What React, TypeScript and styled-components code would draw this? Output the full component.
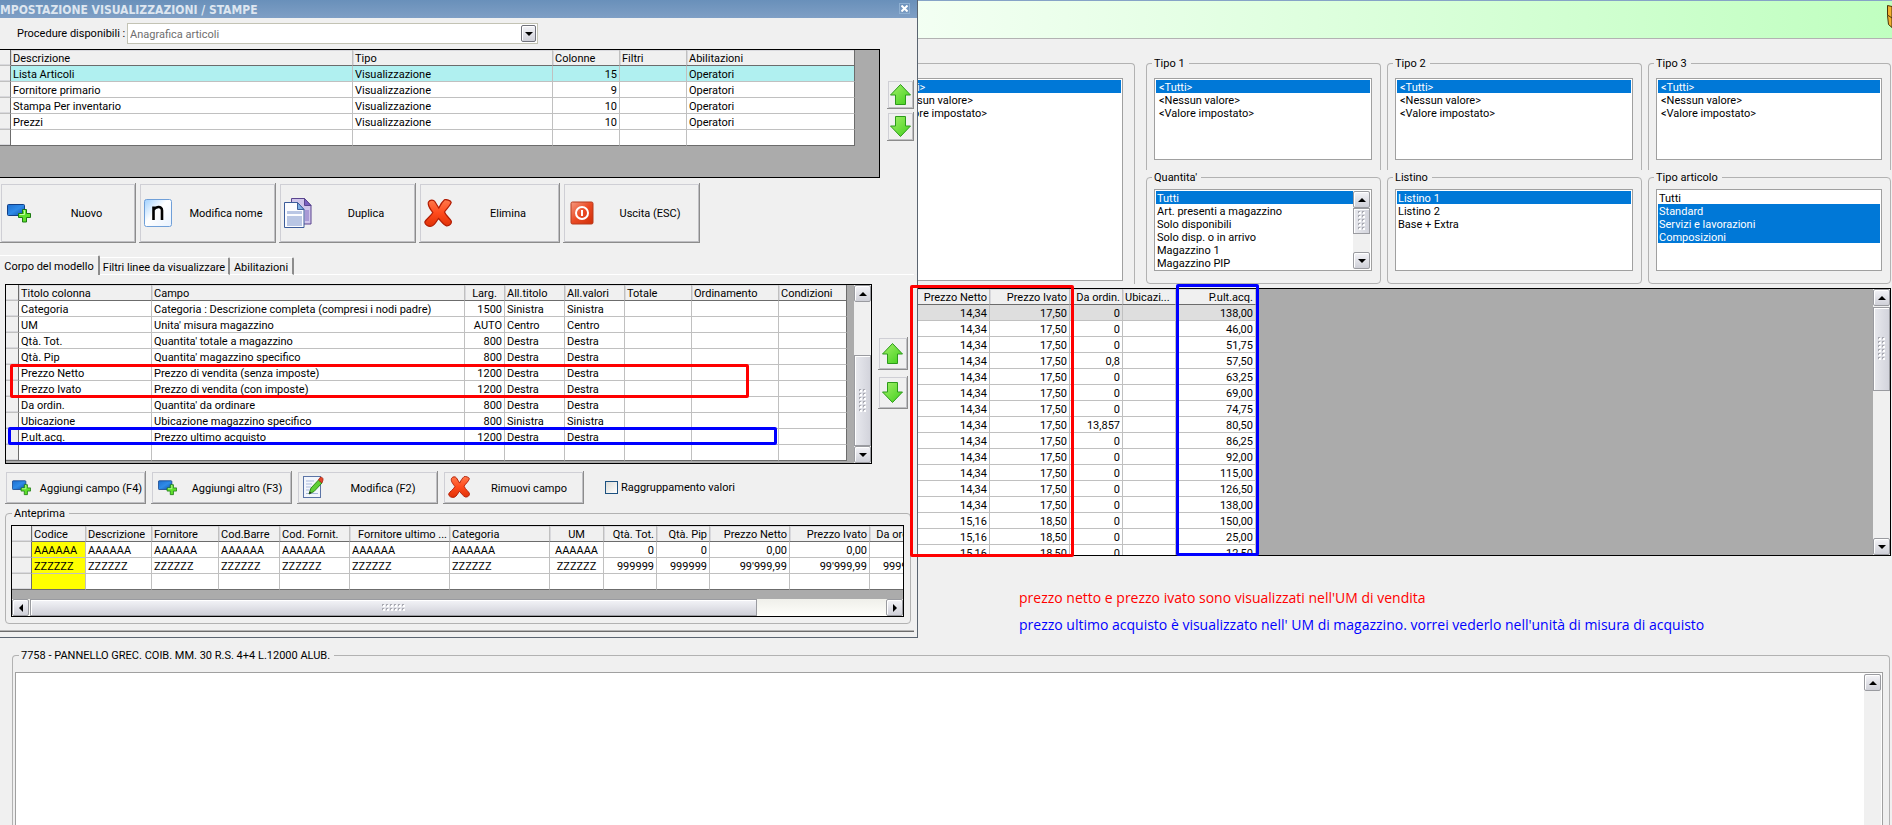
import React from "react";
import styled, { createGlobalStyle, css } from "styled-components";

const face = "#f0f0f0";
const uiFont = 'Roboto, "DejaVu Sans Condensed", sans-serif';

const GlobalStyle = createGlobalStyle`
  *, *::before, *::after { box-sizing: border-box; }
  body {
    margin: 0;
    background: ${face};
    color: #000;
    font: 11px/13px ${uiFont};
    overflow: hidden;
  }
  button, select, input, textarea { font: inherit; color: inherit; margin: 0; }
`;

/* ---------- shared parts ---------- */

const GroupBox = styled.fieldset`
  margin: 0;
  min-width: 0;
  border: 1px solid #b2b2b2;
  border-radius: 4px;
  padding: 7px 8px 0 7px;
`;

const GroupTitle = styled.legend`
  margin-left: -2px;
  padding: 0 4px 0 2px;
  line-height: 15px;
`;

const scrollFace = css`
  border: 1px solid #9a9ba0;
  background: linear-gradient(#f4f4f8, #cfd0d8);
  box-shadow: inset 1px 1px 0 #fff;
`;

const ScrollColumn = styled.div`
  flex: none;
  display: flex;
  flex-direction: column;
  width: 17px;
  background: #f0f0f0;
`;

const ScrollRow = styled.div`
  flex: none;
  display: flex;
  height: 17px;
  background: linear-gradient(#efefea, #fefefa);
`;

const ScrollButton = styled.button`
  ${scrollFace}
  flex: none;
  display: grid;
  place-items: center;
  width: 17px;
  height: 17px;
  border-radius: 2px;
  padding: 0;
`;

const ScrollTrack = styled.div<{ $offset: number }>`
  flex: 1;
  display: flex;
  min-height: 0;
  padding-top: ${(p) => p.$offset}px;
`;

const VerticalThumb = styled.div<{ $length: number }>`
  ${scrollFace}
  display: grid;
  place-items: center;
  width: 17px;
  height: ${(p) => p.$length}px;
  background: linear-gradient(90deg, #e8e9ee, #d3d4dc);
`;

const HorizontalThumb = styled.div`
  ${scrollFace}
  display: grid;
  place-items: center;
  width: 727px;
  margin: 0 auto 0 1px;
`;

const Triangle = ({ dir }: { dir: "up" | "down" | "left" | "right" }) => {
  const points = {
    up: "0,6 4,2 8,6",
    down: "0,2 4,6 8,2",
    left: "6,0 2,4 6,8",
    right: "2,0 6,4 2,8",
  }[dir];
  return (
    <svg width="8" height="8" viewBox="0 0 8 8" aria-hidden="true">
      <polygon points={points} fill="#000" />
    </svg>
  );
};

const Grip = ({ cols, rows }: { cols: number; rows: number }) => (
  <svg width={cols * 4} height={rows * 4} aria-hidden="true">
    {Array.from({ length: cols * rows }, (_, i) => {
      const x = (i % cols) * 4;
      const y = Math.floor(i / cols) * 4;
      return (
        <g key={i}>
          <rect x={x + 1} y={y + 1} width="2" height="2" fill="#fff" />
          <path d={`M${x} ${y}h2v1h-1v1h-1z`} fill="#a9aab2" />
        </g>
      );
    })}
  </svg>
);

type BarProps = { offset?: number; length?: number; gripRows?: number; down?: boolean };

const VerticalBar = ({ offset = 1, length, gripRows = 6, down = true }: BarProps) => (
  <ScrollColumn>
    <ScrollButton type="button" aria-label="Scorri su"><Triangle dir="up" /></ScrollButton>
    <ScrollTrack $offset={offset}>
      {length ? <VerticalThumb $length={length}><Grip cols={2} rows={gripRows} /></VerticalThumb> : null}
    </ScrollTrack>
    {down && <ScrollButton type="button" aria-label="Scorri giù"><Triangle dir="down" /></ScrollButton>}
  </ScrollColumn>
);

/* ---------- data grid ---------- */

const GridFrame = styled.div`
  display: flex;
  border: 1px solid #000;
  background: #ababab;
  overflow: hidden;
`;

const GridTable = styled.table`
  flex: none;
  align-self: flex-start;
  table-layout: fixed;
  width: 1px;
  border-collapse: separate;
  border-spacing: 0;
`;

const cell = css<{ $align?: string }>`
  height: 16px;
  padding: 2px 2px 0;
  border-right: 1px solid #c0c0c0;
  border-bottom: 1px solid #c0c0c0;
  line-height: 13px;
  font-weight: normal;
  white-space: pre;
  overflow: hidden;
  text-align: ${(p) => p.$align ?? "left"};
`;

const HeadCell = styled.th<{ $align?: string }>`
  ${cell}
  background: ${face};
  border-bottom-color: #6c6c6c;
  box-shadow: inset 1px 1px 0 #d9d9dd;
`;

const BodyCell = styled.td<{ $align?: string; $fill?: string }>`
  ${cell}
  background: ${(p) => p.$fill ?? "#fff"};
`;

const RowHead = styled.th`
  ${cell}
  background: ${face};
  border-right-color: #6c6c6c;
  box-shadow: inset 0 -1px 0 #d9d9dd;
`;

const GridRow = styled.tr<{ $dark?: boolean }>`
  > :last-child { border-right-color: ${(p) => (p.$dark ? "#6c6c6c" : "#c0c0c0")}; }
  tbody > &:last-child > * { border-bottom-color: #6c6c6c; }
`;

type Column = { title: string; width: number; align?: string; headAlign?: string; fill?: string };

type DataGridProps = {
  columns: Column[];
  rows: string[][];
  rowHead?: number;
  firstFill?: string;
  edge?: boolean;
};

const DataGrid = ({ columns, rows, rowHead, firstFill, edge }: DataGridProps) => (
  <GridTable>
    <colgroup>
      {rowHead ? <col width={rowHead} /> : null}
      {columns.map((c) => <col key={c.title} width={c.width} />)}
    </colgroup>
    <thead>
      <GridRow $dark={edge}>
        {rowHead ? <RowHead aria-label="Riga" /> : null}
        {columns.map((c) => (
          <HeadCell key={c.title} scope="col" $align={c.headAlign ?? c.align}>{c.title}</HeadCell>
        ))}
      </GridRow>
    </thead>
    <tbody>
      {rows.map((row, r) => (
        <GridRow key={r} $dark={edge}>
          {rowHead ? <RowHead /> : null}
          {columns.map((c, i) => (
            <BodyCell key={c.title} $align={c.align} $fill={c.fill ?? (r === 0 ? firstFill : undefined)}>
              {row[i] ?? ""}
            </BodyCell>
          ))}
        </GridRow>
      ))}
    </tbody>
  </GridTable>
);

/* ---------- icons ---------- */

const AddIcon = ({ size }: { size: number }) => (
  <svg width={size} height={size} viewBox="0 0 24 24" aria-hidden="true">
    <defs>
      <linearGradient id="addBlue" x1="0" y1="0" x2="1" y2="1">
        <stop offset="0" stopColor="#1f6fd0" /><stop offset="0.5" stopColor="#2f8be8" /><stop offset="1" stopColor="#1050a8" />
      </linearGradient>
    </defs>
    <rect x="0.5" y="3.5" width="17" height="11" rx="1" fill="url(#addBlue)" stroke="#123f86" />
    <path d="M15.500 8.500h4v4h4v4h-4v4.500h-4v-4.500h-4v-4h4z" fill="#5fe02c" stroke="#1c7a12" />
    <path d="M16.500 9.500h1v4h-5" fill="none" stroke="#c4ffa0" />
  </svg>
);

const RenameIcon = () => (
  <svg width="28" height="28" viewBox="0 0 28 28" aria-hidden="true">
    <defs>
      <linearGradient id="keyFill" x1="0" y1="0" x2="1" y2="1">
        <stop offset="0" stopColor="#9fd0ff" /><stop offset="0.45" stopColor="#fff" /><stop offset="1" stopColor="#e8f2ff" />
      </linearGradient>
    </defs>
    <rect x="0.5" y="0.5" width="27" height="27" rx="2" fill="url(#keyFill)" stroke="#6f9fd8" />
    <path d="M9.500 21V7.500M9.500 11C11 8 18 6 18 11.500V21" fill="none" stroke="#000" strokeWidth="2.600" />
  </svg>
);

const CopyIcon = () => (
  <svg width="28" height="30" viewBox="0 0 28 30" aria-hidden="true">
    <path d="M7.500 0.500h13l6.500 7v18.500h-19.500z" fill="#cfc4ea" stroke="#5a458f" />
    <path d="M20.500 0.500v7h6.500z" fill="#7a5fc0" stroke="#5a458f" />
    <path d="M21 12h4v11h-4z" fill="#a99ad6" />
    <path d="M0.500 4.500h13l6.500 7v18h-19.500z" fill="#fbfcff" stroke="#3c5c9a" />
    <path d="M13.500 4.500v7h6.500z" fill="#7fb0e4" stroke="#3c5c9a" />
    <path d="M3 13h15v3h-15zM3 18h15v10h-15z" fill="#b9c6e4" />
  </svg>
);

const DeleteIcon = ({ size }: { size: number }) => (
  <svg width={size} height={size} viewBox="0 0 28 28" aria-hidden="true">
    <defs>
      <linearGradient id="delRed" x1="0" y1="0" x2="0" y2="1">
        <stop offset="0" stopColor="#ff7a4c" /><stop offset="0.5" stopColor="#ff4a1c" /><stop offset="1" stopColor="#e03208" />
      </linearGradient>
    </defs>
    <path d="M4.500 3C6 .5 9.500 .5 10.800 2.500l4 6.500C16.500 5.500 18.500 2.500 20.500 .8c1.500-.8 6.700 .8 6.700 2.700-1 3.500-5 6.500-6.700 9.500 1.500 4 5.500 6.500 6.700 9 .8 2.500-1.700 5-4.700 4.800-3.500-1-5.500-5-8-7.300-2 2.500-3.500 6.500-6.500 7.500C4.500 28 .8 26 .8 23c1.500-3.500 6-5.500 8-9.500C7 10.500 3 7 4.500 3z" fill="url(#delRed)" stroke="#b01c04" strokeWidth="1.200" />
  </svg>
);

const ExitIcon = () => (
  <svg width="24" height="24" viewBox="0 0 24 24" aria-hidden="true">
    <defs>
      <linearGradient id="exitRed" x1="0" y1="0" x2="1" y2="1">
        <stop offset="0" stopColor="#f59a80" /><stop offset="0.5" stopColor="#ea4a24" /><stop offset="1" stopColor="#cf2e08" />
      </linearGradient>
    </defs>
    <rect x="1" y="1" width="22" height="22" rx="1.500" fill="url(#exitRed)" stroke="#b83a1c" />
    <circle cx="12" cy="12" r="6" fill="none" stroke="#fff" strokeWidth="2" />
    <path d="M12 9v6" stroke="#fff" strokeWidth="2" />
  </svg>
);

const EditIcon = () => (
  <svg width="22" height="22" viewBox="0 0 22 22" aria-hidden="true">
    <rect x="1.500" y="0.500" width="17" height="21" fill="#f3f6fc" stroke="#5b74a6" />
    <path d="M4 5h8M4 8h6M4 11h5M4 14h4M4 17.500h12" stroke="#a9b9dc" />
    <path d="M7 18l2-6L16.500 4l3.500 3-8 8.500z" fill="#5fcf35" stroke="#2f8a1c" />
    <path d="M16.500 4l1.500-2.500c1.500-1 3.500.5 3 2.500l-1 3z" fill="#e2452a" stroke="#a82a14" strokeWidth="0.800" />
    <path d="M7 18l.8-2.600 1.800 1.600z" fill="#222" />
  </svg>
);

const GreenArrow = ({ down }: { down?: boolean }) => (
  <svg width="21" height="21" viewBox="0 0 21 21" aria-hidden="true">
    <defs>
      <linearGradient id="arrowGreen" x1="0" y1="0" x2="1" y2="1">
        <stop offset="0" stopColor="#a5f06a" /><stop offset="1" stopColor="#3fcf1a" />
      </linearGradient>
    </defs>
    <path
      d={down ? "M5.500 0.500h10v9.500h5L10.500 20.500.5 10h5z" : "M10.500 0.500L20.500 11h-5v9.500h-10V11H.5z"}
      fill="url(#arrowGreen)"
      stroke="#2c9a1a"
    />
  </svg>
);

const BoxIcon = () => (
  <svg width="5" height="24" viewBox="0 0 5 24" aria-hidden="true">
    <path d="M0.500 0.500l4.500 1v21l-3.500-3-1-9z" fill="#f0b030" stroke="#4a3208" />
    <path d="M0.500 10l4.500 3" stroke="#4a3208" />
  </svg>
);

/* ---------- main window ---------- */

const Page = styled.main`
  position: relative;
  display: flex;
  flex-direction: column;
  height: 100vh;
  overflow: hidden;
`;

const TopBar = styled.header`
  flex: none;
  display: flex;
  justify-content: flex-end;
  height: 39px;
  padding-top: 4px;
  border-top: 1px solid #86a3c7;
  border-bottom: 1px solid #b2b2b2;
  background: linear-gradient(90deg, #fff 36%, #c0ffc0);
`;

const Filters = styled.section`
  flex: none;
  display: grid;
  grid-template-columns: 261fr 235fr 255fr 243fr;
  grid-template-rows: 114px 114px;
  column-gap: 6px;
  padding: 17px 1px 0 879px;
`;

const OpenGroup = styled(GroupBox)`
  border-bottom: 0;
  border-radius: 4px 4px 0 0;
`;

const TallGroup = styled(OpenGroup)`
  grid-row: span 2;
  margin-right: 5px;
  padding-right: 11px;
`;

const LowGroup = styled(GroupBox)`
  padding-top: 4px;
`;

const ListFrame = styled.div<{ $tall?: boolean }>`
  display: flex;
  height: ${(p) => (p.$tall ? 203 : 82)}px;
  padding: 1px;
  border: 1px solid #a0a0a0;
  background: #fff;
`;

const ListBox = styled.select<{ $indent: number }>`
  flex: 1;
  min-width: 0;
  height: 100%;
  border: 0;
  border-radius: 0;
  padding: 0;
  outline: 0;
  background: #fff;
  overflow: hidden;
  scrollbar-width: none;

  option {
    height: 13px;
    min-height: 13px;
    padding: 1px ${(p) => p.$indent}px 0;
    line-height: 13px;
    color: #000;
  }
  option:checked {
    background: #0078d7 linear-gradient(#0078d7, #0078d7);
    color: #fff;
    -webkit-text-fill-color: #fff;
  }
`;

const ValueList = ({ label, items, selected, indent = 1, tall, bar }: {
  label: string; items: string[]; selected: string[]; indent?: number; tall?: boolean; bar?: React.ReactNode;
}) => (
  <ListFrame $tall={tall}>
    <ListBox multiple aria-label={label} defaultValue={selected} $indent={indent}>
      {items.map((i) => <option key={i} value={i}>{i}</option>)}
    </ListBox>
    {bar}
  </ListFrame>
);

const ResultsFrame = styled(GridFrame)`
  flex: none;
  height: 268px;
  margin: 4px 1px 0 0;
  padding-left: 908px;
  justify-content: space-between;
`;

const Notes = styled.section`
  flex: none;
  padding: 28px 0 0 1019px;
  font: 14px/27px "Open Sans", sans-serif;
  white-space: nowrap;
`;

const Note = styled.p<{ $color: string }>`
  margin: 0;
  color: ${(p) => p.$color};
`;

const DetailGroup = styled(OpenGroup)`
  flex: 1;
  display: flex;
  margin: 10px 2px 0 12px;
  padding: 9px 6px 0 2px;
`;

const DetailTitle = styled(GroupTitle)`
  margin-left: 4px;
`;

const DetailFrame = styled.div`
  flex: 1;
  display: flex;
  padding: 1px 1px 0;
  border: 1px solid #a0a0a0;
  border-bottom: 0;
  background: #fff;
`;

const DetailText = styled.textarea`
  flex: 1;
  border: 0;
  padding: 2px;
  outline: 0;
  resize: none;
  background: #fff;
`;

/* ---------- dialog ---------- */

const Dialog = styled.section`
  position: absolute;
  top: 0;
  left: 0;
  width: 918px;
  height: 638px;
  border-right: 1px solid #5a6470;
  border-bottom: 1px solid #5a6470;
  background: ${face};
`;

const TitleBar = styled.header`
  display: flex;
  justify-content: space-between;
  height: 18px;
  padding-right: 7px;
  background: linear-gradient(#6990ba, #7f9fc5);
`;

const Title = styled.h1`
  margin: 0;
  padding-top: 2px;
  color: #dde6f0;
  font: bold 12px/16px "DejaVu Sans Condensed", "DejaVu Sans", sans-serif;
`;

const CloseButton = styled.button`
  display: grid;
  place-items: center;
  width: 11px;
  height: 11px;
  margin-top: 3px;
  border: 1px solid #8fb0d2;
  padding: 0;
  background: transparent;
`;

const ProcedureRow = styled.div`
  display: flex;
  align-items: center;
  height: 31px;
  padding-left: 17px;
`;

const ProcedureLabel = styled.label`
  width: 110px;
  line-height: 15px;
`;

const ComboFrame = styled.div`
  display: flex;
  align-items: center;
  width: 411px;
  height: 21px;
  padding-right: 1px;
  border: 1px solid #c3c3b4;
  background: #fff;
`;

const Combo = styled.select`
  flex: 1;
  height: 19px;
  border: 0;
  padding: 1px 2px 0;
  outline: 0;
  appearance: none;
  background: transparent;
  color: #6e6e6e;
`;

const ComboArrow = styled.span`
  ${scrollFace}
  display: grid;
  place-items: center;
  width: 15px;
  height: 17px;
  border-color: #70717a;
  border-radius: 2px;
`;

const SideBySide = styled.div`
  position: relative;
  display: flex;
`;

const ProcedureFrame = styled(GridFrame)`
  width: 880px;
  height: 129px;
  border-left: 0;
`;

const MoveColumn = styled.div<{ $large?: boolean }>`
  display: flex;
  flex-direction: column;
  gap: ${(p) => (p.$large ? 6 : 3)}px;
  padding: ${(p) => (p.$large ? "53px 0 0 6px" : "31px 0 0 7px")};
`;

const raised = css`
  border: 0;
  border-right: 1px solid #8c8c8c;
  border-bottom: 1px solid #8c8c8c;
  border-radius: 0;
  background: ${face};
  box-shadow: inset 1px 1px 0 ${face}, inset 2px 2px 0 #cfcfd5, inset -1px -1px 0 #bfbfc3;
`;

const MoveButton = styled.button<{ $large?: boolean }>`
  ${raised}
  display: grid;
  place-items: center;
  width: ${(p) => (p.$large ? 30 : 27)}px;
  height: ${(p) => (p.$large ? 33 : 29)}px;
  padding: 0;
`;

const Toolbar = styled.div`
  display: flex;
  gap: 3px;
  padding-top: 5px;
`;

const ToolButton = styled.button<{ $width?: number }>`
  ${raised}
  display: grid;
  grid-template-columns: 38px 1fr;
  align-items: center;
  width: ${(p) => p.$width ?? 137}px;
  height: 60px;
  padding: 0;
  text-align: center;
`;

const IconSlot = styled.span`
  display: grid;
  place-items: center;
`;

const Caption = styled.span`
  padding-top: 2px;
`;

const Tabs = styled.div`
  display: flex;
  align-items: flex-end;
  margin-right: 3px;
  padding-top: 12px;
`;

const Tab = styled.button<{ $active?: boolean; $width: number }>`
  width: ${(p) => p.$width}px;
  height: ${(p) => (p.$active ? 20 : 18)}px;
  border: 0;
  border-top: 1px solid #fff;
  border-right: 2px solid #8c8c8c;
  border-bottom: ${(p) => (p.$active ? "0" : "1px solid #fff")};
  border-radius: 0 2px 0 0;
  padding: 2px 0 0;
  background: ${face};
  white-space: nowrap;
`;

const TabLine = styled.div`
  flex: 1;
  border-bottom: 1px solid #fff;
`;

const ModelFrame = styled(GridFrame)`
  width: 867px;
  height: 180px;
  justify-content: space-between;
`;

const ModelSection = styled(SideBySide)`
  padding: 9px 0 0 5px;
`;

const Actions = styled.div`
  display: flex;
  align-items: center;
  gap: 5px;
  padding: 7px 0 0 5px;
`;

const ActionButton = styled.button`
  ${raised}
  display: grid;
  grid-template-columns: 32px 1fr;
  align-items: center;
  width: 141px;
  height: 33px;
  padding: 0;
  text-align: center;
  white-space: nowrap;
`;

const CheckLabel = styled.label`
  display: flex;
  align-items: center;
  gap: 3px;
  margin-left: 16px;
`;

const Check = styled.input`
  appearance: none;
  width: 13px;
  height: 13px;
  border: 1px solid #1c5180;
  background: linear-gradient(135deg, #dcdcd7, #fff);
`;

const PreviewGroup = styled(GroupBox)`
  margin: 2px 6px 0 5px;
  padding: 4px 6px 6px 5px;
`;

const PreviewTitle = styled(GroupTitle)`
  margin-left: 1px;
`;

const PreviewFrame = styled(GridFrame)`
  flex-direction: column;
  justify-content: space-between;
  height: 92px;
`;

const FooterRule = styled.hr`
  height: 2px;
  margin: 6px 3px 0 0;
  border: 0;
  border-top: 1px solid #b5b5b5;
  border-bottom: 1px solid #6c6c6c;
`;

/* ---------- highlight marks drawn over the windows ---------- */

const Mark = styled.div`
  position: absolute;
  border: 3px solid #f00;
  border-radius: 2px;
  pointer-events: none;
`;

const SalePriceRowsMark = styled(Mark)`
  top: 89px;
  left: 10px;
  width: 739px;
  height: 34px;
`;

const PurchaseRowMark = styled(Mark)`
  top: 152px;
  left: 8px;
  width: 769px;
  height: 18px;
  border-color: #00f;
`;

const SalePriceColumnsMark = styled(Mark)`
  top: 285px;
  left: 910px;
  width: 164px;
  height: 272px;
`;

const PurchaseColumnMark = styled(Mark)`
  top: 284px;
  left: 1176px;
  width: 83px;
  height: 272px;
  border-color: #00f;
`;

/* ---------- data ---------- */

const anyValue = ["<Tutti>", "<Nessun valore>", "<Valore impostato>"];

const procedureColumns: Column[] = [
  { title: "Descrizione", width: 342 },
  { title: "Tipo", width: 200 },
  { title: "Colonne", width: 67, align: "right", headAlign: "left" },
  { title: "Filtri", width: 67 },
  { title: "Abilitazioni", width: 168 },
];

const procedureRows = [
  ["Lista Articoli", "Visualizzazione", "15", "", "Operatori"],
  ["Fornitore primario", "Visualizzazione", "9", "", "Operatori"],
  ["Stampa Per inventario", "Visualizzazione", "10", "", "Operatori"],
  ["Prezzi", "Visualizzazione", "10", "", "Operatori"],
  [],
];

const modelColumns: Column[] = [
  { title: "Titolo colonna", width: 133 },
  { title: "Campo", width: 313 },
  { title: "Larg.", width: 40, align: "right", headAlign: "center" },
  { title: "All.titolo", width: 60 },
  { title: "All.valori", width: 60 },
  { title: "Totale", width: 67 },
  { title: "Ordinamento", width: 87 },
  { title: "Condizioni", width: 68 },
];

const modelRows = [
  ["Categoria", "Categoria : Descrizione completa (compresi i nodi padre)", "1500", "Sinistra", "Sinistra"],
  ["UM", "Unita' misura magazzino", "AUTO", "Centro", "Centro"],
  ["Qtà. Tot.", "Quantita' totale a magazzino", "800", "Destra", "Destra"],
  ["Qtà. Pip", "Quantita' magazzino specifico", "800", "Destra", "Destra"],
  ["Prezzo Netto", "Prezzo di vendita (senza imposte)", "1200", "Destra", "Destra"],
  ["Prezzo Ivato", "Prezzo di vendita (con imposte)", "1200", "Destra", "Destra"],
  ["Da ordin.", "Quantita' da ordinare", "800", "Destra", "Destra"],
  ["Ubicazione", "Ubicazione magazzino specifico", "800", "Sinistra", "Sinistra"],
  ["P.ult.acq.", "Prezzo ultimo acquisto", "1200", "Destra", "Destra"],
  [],
];

const previewColumns: Column[] = [
  { title: "Codice", width: 54, fill: "#ff0" },
  { title: "Descrizione", width: 66 },
  { title: "Fornitore", width: 67 },
  { title: "Cod.Barre", width: 61 },
  { title: "Cod. Fornit.", width: 70 },
  { title: "Fornitore ultimo ...", width: 100, headAlign: "right" },
  { title: "Categoria", width: 100 },
  { title: "UM", width: 54, align: "center" },
  { title: "Qtà. Tot.", width: 53, align: "right" },
  { title: "Qtà. Pip", width: 53, align: "right" },
  { title: "Prezzo Netto", width: 80, align: "right" },
  { title: "Prezzo Ivato", width: 80, align: "right" },
  { title: "Da ordin.", width: 53, align: "right" },
];

const previewRows = [
  [...Array(8).fill("AAAAAA"), "0", "0", "0,00", "0,00", "0"],
  [...Array(8).fill("ZZZZZZ"), "999999", "999999", "99'999,99", "99'999,99", "999999"],
  [],
];

const resultColumns: Column[] = [
  { title: "Prezzo Netto", width: 81, align: "right" },
  { title: "Prezzo Ivato", width: 80, align: "right" },
  { title: "Da ordin.", width: 53, align: "right" },
  { title: "Ubicazi...", width: 53 },
  { title: "P.ult.acq.", width: 80, align: "right" },
];

const toOrder: Record<number, string> = { 3: "0,8", 7: "13,857" };

const resultRows = [
  "138,00", "46,00", "51,75", "57,50", "63,25", "69,00", "74,75", "80,50", "86,25", "92,00",
  "115,00", "126,50", "138,00", "150,00", "25,00", "12,50",
].map((price, i) => [i < 13 ? "14,34" : "15,16", i < 13 ? "17,50" : "18,50", toOrder[i] ?? "0", "", price]);

export default function App() {
  return (
    <>
      <GlobalStyle />
      <Page>
        <TopBar><BoxIcon /></TopBar>

        <Filters>
          <TallGroup>
            <GroupTitle>&nbsp;</GroupTitle>
            <ValueList label="Categoria" items={anyValue} selected={["<Tutti>"]} indent={3} tall />
          </TallGroup>
          {["Tipo 1", "Tipo 2", "Tipo 3"].map((name) => (
            <OpenGroup key={name}>
              <GroupTitle>{name}</GroupTitle>
              <ValueList label={name} items={anyValue} selected={["<Tutti>"]} indent={3} />
            </OpenGroup>
          ))}
          <LowGroup>
            <GroupTitle>Quantita'</GroupTitle>
            <ValueList
              label="Quantita'"
              items={["Tutti", "Art. presenti a magazzino", "Solo disponibili", "Solo disp. o in arrivo", "Magazzino 1", "Magazzino PIP"]}
              selected={["Tutti"]}
              bar={<VerticalBar offset={0} length={26} gripRows={5} />}
            />
          </LowGroup>
          <LowGroup>
            <GroupTitle>Listino</GroupTitle>
            <ValueList label="Listino" items={["Listino 1", "Listino 2", "Base + Extra"]} selected={["Listino 1"]} />
          </LowGroup>
          <LowGroup>
            <GroupTitle>Tipo articolo</GroupTitle>
            <ValueList
              label="Tipo articolo"
              items={["Tutti", "Standard", "Servizi e lavorazioni", "Composizioni"]}
              selected={["Standard", "Servizi e lavorazioni", "Composizioni"]}
            />
          </LowGroup>
        </Filters>

        <ResultsFrame>
          <DataGrid columns={resultColumns} rows={resultRows} firstFill="#dedede" />
          <VerticalBar length={84} />
        </ResultsFrame>

        <Notes>
          <Note $color="#f00">prezzo netto e prezzo ivato sono visualizzati nell'UM di vendita</Note>
          <Note $color="#00f">prezzo ultimo acquisto è visualizzato nell' UM di magazzino. vorrei vederlo nell'unità di misura di acquisto</Note>
        </Notes>

        <DetailGroup>
          <DetailTitle>7758 - PANNELLO GREC. COIB. MM. 30 R.S. 4+4 L.12000 ALUB.</DetailTitle>
          <DetailFrame>
            <DetailText aria-label="Note articolo" />
            <VerticalBar down={false} />
          </DetailFrame>
        </DetailGroup>

        <Dialog role="dialog" aria-labelledby="dialog-title">
          <TitleBar>
            <Title id="dialog-title">MPOSTAZIONE VISUALIZZAZIONI / STAMPE</Title>
            <CloseButton type="button" aria-label="Chiudi">
              <svg width="7" height="7" viewBox="0 0 7 7" aria-hidden="true">
                <path d="M0.500 0.500l6 6M6.500 0.500l-6 6" stroke="#fff" strokeWidth="2" />
              </svg>
            </CloseButton>
          </TitleBar>

          <ProcedureRow>
            <ProcedureLabel htmlFor="procedure">Procedure disponibili :</ProcedureLabel>
            <ComboFrame>
              <Combo id="procedure"><option>Anagrafica articoli</option></Combo>
              <ComboArrow><Triangle dir="down" /></ComboArrow>
            </ComboFrame>
          </ProcedureRow>

          <SideBySide>
            <ProcedureFrame>
              <DataGrid columns={procedureColumns} rows={procedureRows} rowHead={11} firstFill="#b0f0f0" edge />
            </ProcedureFrame>
            <MoveColumn>
              <MoveButton type="button" aria-label="Sposta su"><GreenArrow /></MoveButton>
              <MoveButton type="button" aria-label="Sposta giù"><GreenArrow down /></MoveButton>
            </MoveColumn>
          </SideBySide>

          <Toolbar>
            <ToolButton type="button" $width={136}><IconSlot><AddIcon size={24} /></IconSlot><Caption>Nuovo</Caption></ToolButton>
            <ToolButton type="button"><IconSlot><RenameIcon /></IconSlot><Caption>Modifica nome</Caption></ToolButton>
            <ToolButton type="button"><IconSlot><CopyIcon /></IconSlot><Caption>Duplica</Caption></ToolButton>
            <ToolButton type="button" $width={141}><IconSlot><DeleteIcon size={28} /></IconSlot><Caption>Elimina</Caption></ToolButton>
            <ToolButton type="button"><IconSlot><ExitIcon /></IconSlot><Caption>Uscita (ESC)</Caption></ToolButton>
          </Toolbar>

          <Tabs role="tablist">
            <Tab type="button" role="tab" aria-selected="true" $active $width={100}>Corpo del modello</Tab>
            <Tab type="button" role="tab" aria-selected="false" $width={130}>Filtri linee da visualizzare</Tab>
            <Tab type="button" role="tab" aria-selected="false" $width={64}>Abilitazioni</Tab>
            <TabLine />
          </Tabs>

          <ModelSection>
            <ModelFrame>
              <DataGrid columns={modelColumns} rows={modelRows} rowHead={13} edge />
              <VerticalBar offset={53} length={91} />
            </ModelFrame>
            <MoveColumn $large>
              <MoveButton type="button" $large aria-label="Sposta campo su"><GreenArrow /></MoveButton>
              <MoveButton type="button" $large aria-label="Sposta campo giù"><GreenArrow down /></MoveButton>
            </MoveColumn>
            <SalePriceRowsMark />
            <PurchaseRowMark />
          </ModelSection>

          <Actions>
            <ActionButton type="button"><IconSlot><AddIcon size={19} /></IconSlot><Caption>Aggiungi campo (F4)</Caption></ActionButton>
            <ActionButton type="button"><IconSlot><AddIcon size={19} /></IconSlot><Caption>Aggiungi altro (F3)</Caption></ActionButton>
            <ActionButton type="button"><IconSlot><EditIcon /></IconSlot><Caption>Modifica (F2)</Caption></ActionButton>
            <ActionButton type="button"><IconSlot><DeleteIcon size={22} /></IconSlot><Caption>Rimuovi campo</Caption></ActionButton>
            <CheckLabel><Check type="checkbox" />Raggruppamento valori</CheckLabel>
          </Actions>

          <PreviewGroup>
            <PreviewTitle>Anteprima</PreviewTitle>
            <PreviewFrame>
              <DataGrid columns={previewColumns} rows={previewRows} rowHead={20} />
              <ScrollRow>
                <ScrollButton type="button" aria-label="Scorri a sinistra"><Triangle dir="left" /></ScrollButton>
                <HorizontalThumb><Grip cols={6} rows={2} /></HorizontalThumb>
                <ScrollButton type="button" aria-label="Scorri a destra"><Triangle dir="right" /></ScrollButton>
              </ScrollRow>
            </PreviewFrame>
          </PreviewGroup>
          <FooterRule />
        </Dialog>

        <SalePriceColumnsMark />
        <PurchaseColumnMark />
      </Page>
    </>
  );
}
